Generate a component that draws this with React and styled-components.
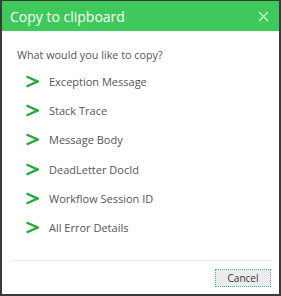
import React from "react";
import styled, { createGlobalStyle } from "styled-components";

const GlobalStyle = createGlobalStyle`
  html, body {
    margin: 0;
    padding: 0;
    background: #ffffff;
  }
  * {
    box-sizing: border-box;
  }
`;

const items = [
  "Exception Message",
  "Stack Trace",
  "Message Body",
  "DeadLetter DocId",
  "Workflow Session ID",
  "All Error Details",
];

const Chevron = () => (
  <svg width="14" height="13" viewBox="0 0 14 13">
    <path
      d="M1.5 1.5 L12.5 6.5 L1.5 11.5"
      fill="none"
      stroke="#27a83a"
      strokeWidth="2.4"
      strokeLinejoin="miter"
    />
  </svg>
);

const App = () => {
  return (
    <>
      <GlobalStyle />
      <Dialog>
        <Header>
          <Title>Copy to clipboard</Title>
          <Close aria-label="close">
            <svg width="11" height="11" viewBox="0 0 11 11">
              <path
                d="M1 1 L10 10 M10 1 L1 10"
                stroke="#d7f5dc"
                strokeWidth="1.3"
              />
            </svg>
          </Close>
        </Header>
        <Body>
          <Question>What would you like to copy?</Question>
          <List>
            {items.map((item) => (
              <Item key={item}>
                <Chevron />
                <span>{item}</span>
              </Item>
            ))}
          </List>
        </Body>
        <Footer>
          <CancelButton>Cancel</CancelButton>
        </Footer>
      </Dialog>
    </>
  );
};

const Dialog = styled.div`
  width: 281px;
  height: 296px;
  border: 1px solid #3a3a3a;
  border-left-width: 2px;
  border-right-width: 2px;
  border-bottom-width: 2px;
  background: #fff;
  display: flex;
  flex-direction: column;
  font-family: "Open Sans", "Noto Sans", sans-serif;
`;

const Header = styled.div`
  height: 30px;
  background: #3ec95a;
  display: flex;
  align-items: center;
  justify-content: space-between;
  padding: 0 10px 0 8px;
`;

const Title = styled.div`
  color: #fff;
  font-size: 14px;
  line-height: 1;
  padding-top: 1px;
`;

const Close = styled.div`
  display: flex;
  align-items: center;
`;

const Body = styled.div`
  flex: 1;
  padding: 17px 0 0 15px;
`;

const Question = styled.div`
  color: #555;
  font-size: 10.8px;
  line-height: 14px;
`;

const List = styled.div`
  display: flex;
  flex-direction: column;
  margin-top: 12px;
  gap: 15.4px;
`;

const Item = styled.div`
  display: flex;
  align-items: center;
  gap: 10px;
  padding-left: 8px;
  height: 14px;
  color: #555;
  font-size: 11px;
`;

const Footer = styled.div`
  margin: 0 8px;
  border-top: 1px solid #ececec;
  display: flex;
  justify-content: flex-end;
  padding: 8px 0 7px;
`;

const CancelButton = styled.button`
  width: 56px;
  height: 18px;
  background: #ececec;
  border: 1px dotted #4aa3df;
  font-family: "Open Sans", "Noto Sans", sans-serif;
  font-size: 10px;
  color: #333;
  padding: 0;
`;

export default App;
